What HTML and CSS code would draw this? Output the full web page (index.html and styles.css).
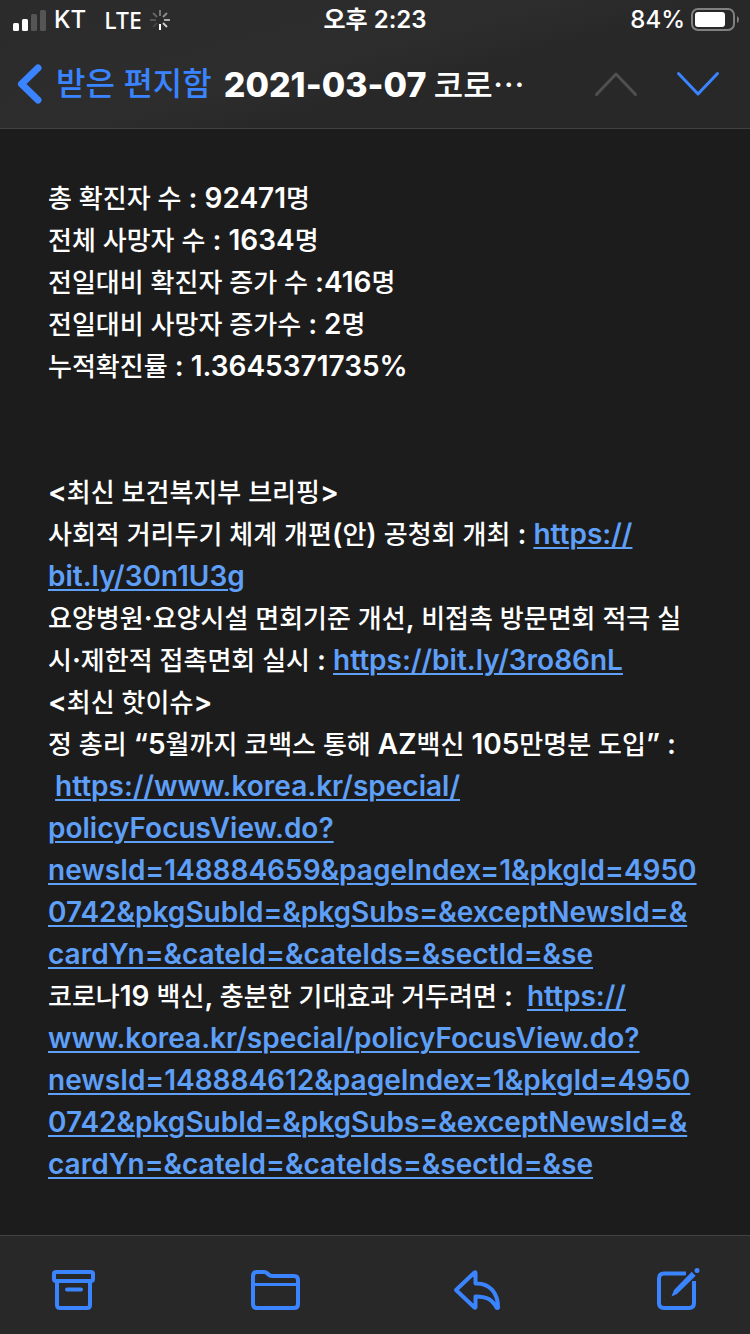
FILE: index.html
```html
<!DOCTYPE html>
<html lang="ko">
<head>
<meta charset="utf-8">
<meta name="viewport" content="width=device-width, initial-scale=1">
<title>2021-03-07 코로나</title>
<link rel="stylesheet" href="styles.css">
</head>
<body>
<div class="screen">
  <header class="header">
    <div class="status">
      <div class="status-left">
        <svg class="signal" width="34" height="22" viewBox="0 0 34 22" aria-hidden="true">
          <rect x="1" y="14" width="6" height="8" rx="1.5" fill="#fff"/>
          <rect x="10" y="10" width="6" height="12" rx="1.5" fill="#fff"/>
          <rect x="19" y="5" width="6" height="17" rx="1.5" fill="#555"/>
          <rect x="28" y="1" width="6" height="21" rx="1.5" fill="#555"/>
        </svg>
        <span class="carrier">KT</span>
        <span class="network">LTE</span>
        <svg class="spinner" width="20" height="20" viewBox="0 0 20 20" fill="none" stroke-width="2" aria-hidden="true">
          <path d="M10 0v6" stroke="#777"/>
          <path d="M17 3l-4 4" stroke="#8c8c8c"/>
          <path d="M20 10h-6" stroke="#aaa"/>
          <path d="M17 17l-4-4" stroke="#ccc"/>
          <path d="M10 20v-6" stroke="#fff"/>
          <path d="M3 17l4-4" stroke="#444"/>
          <path d="M0 10h6" stroke="#555"/>
          <path d="M3 3l4 4" stroke="#666"/>
        </svg>
      </div>
      <time class="clock">오후 2:23</time>
      <div class="status-right">
        <span>84%</span>
        <svg width="47" height="24" viewBox="0 0 47 24" aria-hidden="true">
          <rect x="1" y="1" width="42" height="21" rx="6" fill="none" stroke="#808080" stroke-width="2"/>
          <rect x="4" y="4" width="30" height="15" rx="3" fill="#fff"/>
          <path d="M46 8q2 1 2 3.500t-2 3.500z" fill="#808080"/>
        </svg>
      </div>
    </div>
    <nav class="nav">
      <button class="back" type="button">
        <svg width="26" height="40" viewBox="0 0 26 40" fill="none" stroke="currentColor" stroke-width="7" stroke-linecap="round" stroke-linejoin="round" aria-hidden="true"><path d="M21 4L4.500 20L21 36"/></svg>
        <span>받은 편지함</span>
      </button>
      <h1 class="title">2021-03-07 <span class="title-ko">코로…</span></h1>
      <div class="pager">
        <button class="step" type="button" aria-label="이전" disabled>
          <svg width="42" height="24" viewBox="0 0 42 24" fill="none" stroke="currentColor" stroke-width="3" stroke-linecap="round" stroke-linejoin="round"><path d="M1.500 22.500L21 2L40.500 22.500"/></svg>
        </button>
        <button class="step" type="button" aria-label="다음">
          <svg width="42" height="24" viewBox="0 0 42 24" fill="none" stroke="currentColor" stroke-width="3" stroke-linecap="round" stroke-linejoin="round"><path d="M1.500 1.500L21 22L40.500 1.500"/></svg>
        </button>
      </div>
    </nav>
  </header>

  <main class="message">
    <p class="block">총 확진자 수<span class="latin"> : 92471</span>명<br>전체 사망자 수<span class="latin"> : 1634</span>명<br>전일대비 확진자 증가 수<span class="latin"> :416</span>명<br>전일대비 사망자 증가수<span class="latin"> : 2</span>명<br>누적확진률<span class="latin"> : 1.3645371735%</span></p>
    <p class="block"><span class="latin">&lt;</span>최신 보건복지부 브리핑<span class="latin">&gt;</span><br>사회적 거리두기 체계 개편<span class="latin">(</span>안<span class="latin">) </span>공청회 개최<span class="latin"> : <a href="https://bit.ly/30n1U3g">https://<br>bit.ly/30n1U3g</a></span><br>요양병원<span class="latin">·</span>요양시설 면회기준 개선<span class="latin">, </span>비접촉 방문면회 적극 실<br>시<span class="latin">·</span>제한적 접촉면회 실시<span class="latin"> : <a href="https://bit.ly/3ro86nL">https://bit.ly/3ro86nL</a></span><br><span class="latin">&lt;</span>최신 핫이슈<span class="latin">&gt;</span><br>정 총리<span class="latin"> “5</span>월까지 코백스 통해<span class="latin"> AZ</span>백신<span class="latin"> 105</span>만명분 도입<span class="latin">” :<br>&nbsp;<a href="https://www.korea.kr/special/policyFocusView.do?newsId=148884659">https://www.korea.kr/special/<br>policyFocusView.do?<br>newsId=148884659&amp;pageIndex=1&amp;pkgId=4950<br>0742&amp;pkgSubId=&amp;pkgSubs=&amp;exceptNewsId=&amp;<br>cardYn=&amp;cateId=&amp;cateIds=&amp;sectId=&amp;se</a></span><br>코로나<span class="latin">19 </span>백신<span class="latin">, </span>충분한 기대효과 거두려면<span class="latin"> :&nbsp; <a href="https://www.korea.kr/special/policyFocusView.do?newsId=148884612">https://<br>www.korea.kr/special/policyFocusView.do?<br>newsId=148884612&amp;pageIndex=1&amp;pkgId=4950<br>0742&amp;pkgSubId=&amp;pkgSubs=&amp;exceptNewsId=&amp;<br>cardYn=&amp;cateId=&amp;cateIds=&amp;sectId=&amp;se</a></span></p>
  </main>

  <footer class="toolbar">
    <button class="tool" type="button" aria-label="보관">
      <svg width="44" height="44" viewBox="0 0 44 44" fill="none" stroke="currentColor" stroke-width="4" stroke-linecap="round" stroke-linejoin="round"><rect x="2" y="4" width="39" height="9" rx="2"/><path d="M5 14v23q0 3 3 3h27q3 0 3-3V14M15 21.500h14"/></svg>
    </button>
    <button class="tool" type="button" aria-label="이동">
      <svg width="50" height="44" viewBox="0 0 50 44" fill="none" stroke="currentColor" stroke-width="4" stroke-linejoin="round"><path d="M3 8q0-4 4-4h7q2 0 3.500 1.500l1 1q1.500 1.500 3.500 1.500h22q4 0 4 4v24q0 4-4 4H7q-4 0-4-4z"/><path d="M3 16.500h45" stroke-width="3"/></svg>
    </button>
    <button class="tool" type="button" aria-label="답장">
      <svg width="48" height="44" viewBox="0 0 48 44" fill="none" stroke="currentColor" stroke-width="4" stroke-linejoin="round"><path d="M1 22L19.500 4.500q1-.5 1 .5v10.500C35 15 43 25 43 39.500q-.500 1-1.500 0C36.500 31 31.500 28.500 20.500 28.500V39q0 1-1 .5z"/></svg>
    </button>
    <button class="tool" type="button" aria-label="새로운 메시지">
      <svg width="44" height="44" viewBox="0 0 44 44" fill="none" stroke="currentColor" stroke-width="4"><path d="M29 5.500H7q-5 0-5 5V35q0 5 5 5h25q5 0 5-5V13"/><path d="M35.500 2L40 6.500L19 27l-5 2l2-5z" fill="#282828" stroke="#282828" stroke-width="3"/><path d="M35 3.500l4 4L20 26L14.500 28.500L17 22z" fill="currentColor" stroke="none"/><path d="M34.500 2.500l5 5" stroke="#282828" stroke-width="1.500"/><circle cx="40" cy="2.500" r="2.500" fill="currentColor" stroke="none"/></svg>
    </button>
  </footer>
</div>
</body>
</html>
```
FILE: styles.css
```css
* {
  box-sizing: border-box;
}

body {
  margin: 0;
  background: #1c1c1c;
  color: #fff;
  font-family: Inter, "Noto Sans CJK KR", sans-serif;
}

button {
  margin: 0;
  padding: 0;
  border: 0;
  background: none;
  color: #3a84ff;
  font: inherit;
}

svg {
  display: block;
  overflow: visible;
  flex: none;
}

.screen {
  display: flex;
  flex-direction: column;
  min-height: 100vh;
}

.header {
  background: linear-gradient(165deg, #2b2b2b, #2d2d2d 45%, #282828 60%);
  border-bottom: 1px solid #414141;
}

.status {
  display: grid;
  grid-template-columns: 1fr auto 1fr;
  align-items: center;
  height: 40px;
  padding: 0 12px;
  font-size: 24px;
  font-weight: 500;
  line-height: 40px;
}

.status-left,
.status-right {
  display: flex;
  align-items: center;
}

.status-left {
  gap: 8px;
}

.network {
  margin-left: 10px;
  font-family: "Noto Sans", sans-serif;
  font-size: 23px;
}

.status-right {
  justify-content: flex-end;
  gap: 6px;
}

.clock {
  font-weight: 600;
}

.nav {
  display: flex;
  align-items: center;
  height: 88px;
  padding: 0 31px 0 17px;
  white-space: nowrap;
}

.back {
  display: flex;
  align-items: center;
  gap: 13px;
  font-size: 32px;
  font-weight: 500;
  line-height: 40px;
}

.title {
  margin: 0 0 0 12px;
  font-size: 34px;
  font-weight: 800;
  line-height: 40px;
}

.title-ko {
  font-family: "Noto Sans CJK KR", sans-serif;
  font-size: 32px;
  font-weight: 500;
}

.pager {
  display: flex;
  gap: 40px;
  margin-left: auto;
}

.step:disabled {
  color: #505050;
}

.message {
  flex: 1;
  padding: 49px 48px 48px;
  font-size: 26px;
  font-weight: 500;
  line-height: 42px;
  white-space: nowrap;
}

.block {
  margin: 0;
}

.block + .block {
  margin-top: 84px;
}

.latin {
  font-size: 28px;
  font-weight: 600;
  line-height: 30px;
}

.block a {
  color: #5e9ff8;
  text-decoration: underline;
  text-decoration-thickness: 2px;
  text-underline-offset: 3px;
}

.toolbar {
  display: flex;
  align-items: flex-start;
  justify-content: space-between;
  height: 99px;
  padding: 32px 49px 0 52px;
  background: #282828;
  border-top: 1px solid #414141;
}
```
